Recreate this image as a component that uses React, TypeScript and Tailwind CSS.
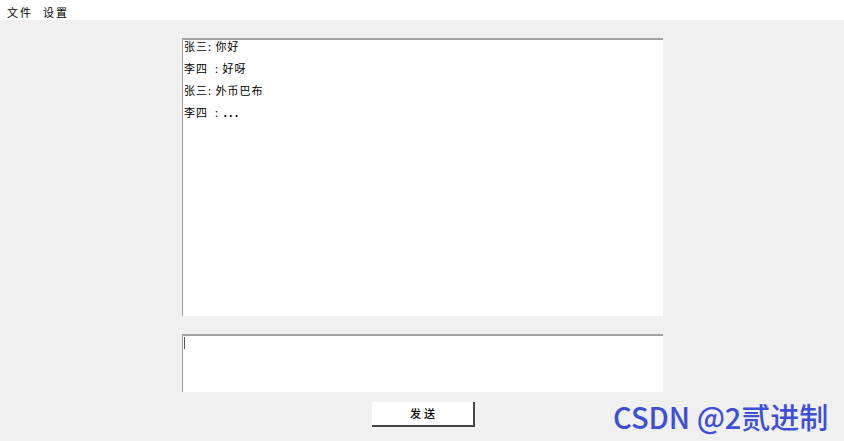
import React from 'react';

const messages = [
  { who: '张三', sep: ':', text: '你好' },
  { who: '李四', sep: '  :', text: '好呀' },
  { who: '张三', sep: ':', text: '外币巴布' },
  { who: '李四', sep: '  :', text: '...' },
];

export default function App() {
  return (
    <div
      className="w-[844px] h-[441px] bg-[#f0f0f0] flex flex-col overflow-hidden relative"
      style={{ fontFamily: '"Noto Sans CJK SC", "Noto Sans", sans-serif' }}
    >
      {/* menu bar */}
      <div className="h-[20px] bg-white flex items-start pt-[5px] gap-[10px] pl-[7px] text-[11px] leading-[14px] tracking-[2px] text-black">
        <span>文件</span>
        <span>设置</span>
      </div>

      {/* chat log */}
      <div className="ml-[182px] mt-[18px] w-[481px] h-[278px] bg-white border-t-2 border-l border-[#a0a0a0] pl-[1px] text-[11px] tracking-[1px] text-black">
        {messages.map((m, i) => (
          <div key={i} className="h-[22px] leading-[12px] whitespace-pre">
            {m.who}
            {m.sep}
            {m.text === '...' ? <span className="tracking-[2px] font-bold">{' ' + m.text}</span> : ' ' + m.text}
          </div>
        ))}
      </div>

      {/* message input */}
      <div className="ml-[182px] mt-[18px] w-[481px] h-[58px] bg-white border-t-2 border-l border-[#a0a0a0] pl-[1px] pt-[1px]">
        <div className="w-[1px] h-[12px] bg-[#555]" />
      </div>

      {/* send button */}
      <div className="ml-[372px] mt-[10px]">
        <button className="w-[103px] h-[25px] bg-white border-r-2 border-b-2 border-[#444] text-[11px] font-medium tracking-[3px] pl-[3px] text-black flex items-center justify-center">
          发送
        </button>
      </div>

      <div className="absolute left-[613px] top-[398px] text-[29px] font-medium text-[#3c4fd6] leading-[36px]">
        CSDN @2贰进制
      </div>
    </div>
  );
}
